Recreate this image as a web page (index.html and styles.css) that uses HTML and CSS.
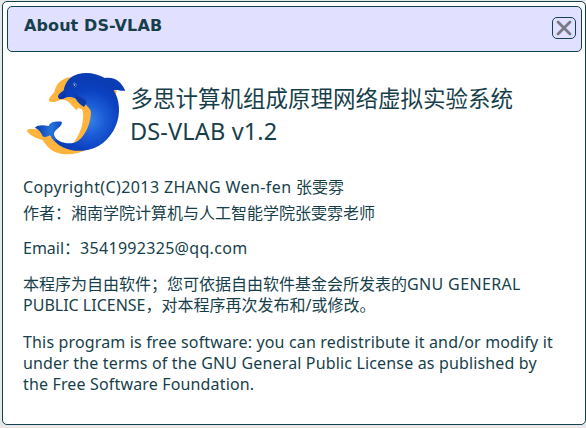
FILE: index.html
```html
<!DOCTYPE html>
<html lang="zh-CN">
<head>
<meta charset="utf-8">
<title>About DS-VLAB</title>
<link rel="stylesheet" href="styles.css">
</head>
<body>
<main class="dialog">
  <header class="titlebar">
    <h1 class="title">About DS-VLAB</h1>
    <button class="close" aria-label="Close">
      <svg width="18" height="18" viewBox="0 0 18 18"><path d="M3 3 15 15M15 3 3 15" fill="none" stroke="#777983" stroke-width="2.8" stroke-linecap="round"/></svg>
    </button>
  </header>
  <section class="content">
    <div class="product">
      <svg class="logo" width="120" height="100" viewBox="0 0 360 300">
        <defs>
          <radialGradient id="body" gradientUnits="userSpaceOnUse" cx="222" cy="180" r="120">
            <stop offset="0" stop-color="#3684e8"/><stop offset=".4" stop-color="#1b5bd6"/><stop offset=".75" stop-color="#0b41c0"/><stop offset="1" stop-color="#0a3cb4"/>
          </radialGradient>
          <linearGradient id="tail" x1="0" y1="0" x2="1" y2="0"><stop offset="0" stop-color="#0838a8"/><stop offset=".6" stop-color="#2874dc"/><stop offset="1" stop-color="#0c46c0"/></linearGradient>
        </defs>
        <path fill="#ffb53d" d="M166 52C138 55 122 74 118 96C110 106 101 114 102 122C109 131 125 124 136 119C150 116 162 124 170 136L184 151L190 143L202 149L235 130Z"/>
        <path fill="#ffb53d" d="M190 135 202 149C209 174 202 211 176 249L200 260 240 200 235 130Z"/>
        <path fill="#ffb53d" d="M215 268C192 282 164 286 136 281C109 276 96 260 83 240C65 235 42 226 36 212C38 205 52 207 65 208L110 222L125 250L174 258Z"/>
        <path fill="#ffb53d" d="M292 88 306 92 301 105Z"/>
        <path fill="url(#body)" d="M130 113C126 105 137 98 146 91C151 65 165 48 190 42C218 35 249 42 269 54C290 52 306 58 316 69C323 77 327 84 331 92C318 94 306 88 296 91C315 121 317 162 303 196C286 239 249 269 204 272C162 275 127 260 108 230L115 228C129 245 151 253 174 249C199 244 217 214 225 180C228 165 229 155 226 149L212 133L207 140C197 134 188 128 182 116C170 108 157 111 149 114C142 118 134 118 130 113Z"/>
        <path fill="url(#tail)" d="M60 203C68 195 82 194 101 198C105 187 118 183 140 185C143 194 132 202 121 212C113 221 118 230 127 239L119 243C112 238 109 229 104 226C98 230 89 234 83 229C79 218 73 209 60 203Z"/>
        <path fill="#092f98" d="M176 101C187 108 200 112 212 120L214 130L207 141C197 134 190 127 184 116ZM130 113C136 111 144 105 152 98L150 113C141 120 134 119 130 113Z" opacity=".7"/>
        <path fill="none" stroke="#6ca9ef" stroke-width="2" d="M174 72Q179 65 184 73Q184 81 178 82"/>
        <circle cx="178" cy="76" r="4" fill="#102a62"/><circle cx="178" cy="75" r="2.5" fill="#e4edff"/>
      </svg>
      <div class="name"><div>多思计算机组成原理网络虚拟实验系统</div><div class="version">DS-VLAB v1.2</div></div>
    </div>
    <div class="copyright"><span class="owner">Copyright(C)2013 ZHANG Wen-fen </span>张雯雰</div>
    <div class="author">作者：湘南学院计算机与人工智能学院张雯雰老师</div>
    <div class="email">Email：<span class="address">3541992325@qq.com</span></div>
    <p class="notice">本程序为自由软件；您可依据自由软件基金会所发表的<span class="gnu">GNU GENERAL</span><br>PUBLIC LICENSE，对本程序再次发布和/或修改。</p>
    <p class="license">This program is free software: you can redistribute it and/or modify it<br>under the terms of the GNU General Public License as published by<br>the Free Software Foundation.</p>
  </section>
</main>
</body>
</html>
```
FILE: styles.css
```css
* { box-sizing: border-box; }
body { margin: 0; padding: 1px 0 3px 2px; height: 428px; overflow: hidden; background: #e8e8e8; color: #173f4b; font: 16px/21px "Noto Sans", "Noto Sans CJK SC", sans-serif; }
.dialog { height: 424px; padding: 4px 3px 4px 4px; border: 1px solid #13424f; border-radius: 5px; background: #fff; }
.titlebar { display: flex; justify-content: space-between; height: 46px; padding: 9px 5px 0 16px; border: 1px solid #13424f; border-radius: 5px; background: #e1e0ff; }
.title { margin: 0; font: bold 16px/19px "DejaVu Sans", sans-serif; letter-spacing: .1px; white-space: nowrap; }
.close { display: flex; align-items: center; justify-content: center; width: 24px; height: 22px; margin-top: 1px; padding: 0; border: 1px solid #13424f; border-radius: 5px; background: #e1e0ff; }
.content { padding: 8px 12px 0 16px; white-space: nowrap; }
.product { display: flex; height: 117px; }
.logo { flex: none; margin-left: -8px; }
.name { padding-top: 22px; margin-left: -4.5px; font-size: 22.5px; line-height: 33px; }
.version { margin-left: -.5px; font-size: 23.5px; letter-spacing: .15px; }
.copyright { height: 26px; }
.owner { letter-spacing: .4px; }
.author { height: 35px; }
.email { height: 36px; }
.address { letter-spacing: .3px; }
.notice { margin: 0 0 16px; }
.gnu { letter-spacing: .36px; }
.license { margin: 0; letter-spacing: .155px; }
```
